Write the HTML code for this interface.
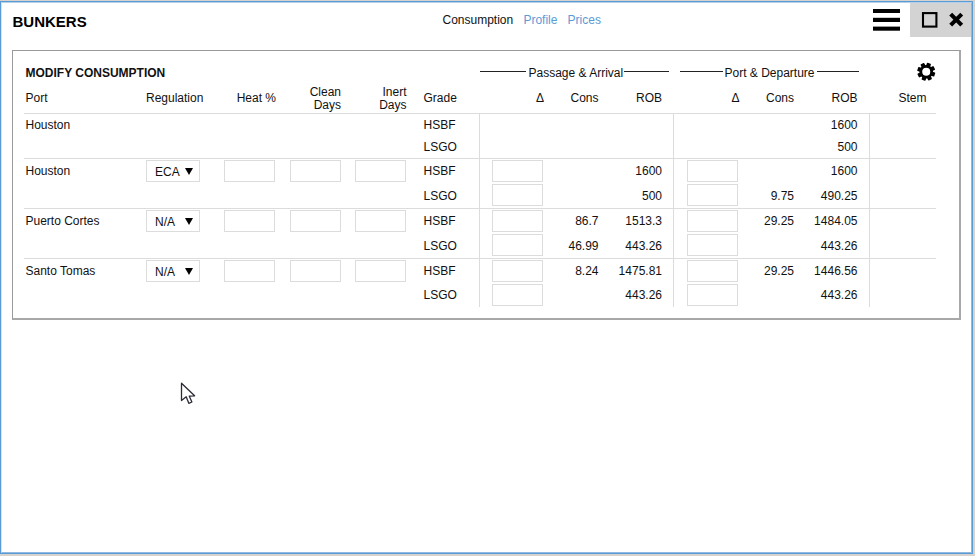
<!DOCTYPE html>
<html>
<head>
<meta charset="utf-8">
<title>Bunkers</title>
<style>
html,body{margin:0;padding:0;}
body{width:975px;height:556px;position:relative;overflow:hidden;background:#d6d3cf;font-family:"Liberation Sans",Arial,sans-serif;font-size:12px;color:#111;}
#win{position:absolute;left:0;top:1px;width:973px;height:553px;box-sizing:border-box;border:1px solid #5b9bd5;background:#fff;}
#win:before{content:'';position:absolute;left:0;top:0;right:0;bottom:0;border:1px solid #8fb9e3;border-left-color:#d3e4f5;border-top-color:#b5d0ec;}
.t{position:absolute;white-space:nowrap;line-height:14px;height:14px;}
.r{text-align:right;width:80px;margin-left:-80px;}
h1{position:absolute;margin:0;left:12.5px;top:13px;font-size:15px;line-height:18px;font-weight:bold;color:#000;}
.nav a{color:#5b9bd5;text-decoration:none;}
#btns{position:absolute;left:910px;top:3px;width:61px;height:34px;background:#d3d3d3;}
#panel{position:absolute;left:12px;top:50px;width:946px;height:267px;border:1px solid #9a9a9a;border-right:2px solid #a8a8a8;border-bottom:2px solid #a8a8a8;box-sizing:content-box;background:#fff;}
.hl{position:absolute;height:1px;background:#dcdcdc;}
.vl{position:absolute;width:1px;background:#dcdcdc;}
.dash{position:absolute;height:1px;background:#222;}
input.i{position:absolute;box-sizing:border-box;width:51px;height:22px;border:1px solid #dcdcdc;background:#fff;padding:0;margin:0;outline:none;border-radius:0;}
.sel{position:absolute;box-sizing:border-box;width:54px;height:22px;border:1px solid #dcdcdc;background:#fff;}
.sel span{position:absolute;left:8px;top:4px;line-height:14px;}
.sel i{position:absolute;left:38px;top:7px;width:0;height:0;border-left:4px solid transparent;border-right:4px solid transparent;border-top:7px solid #000;}
h2{position:absolute;margin:0;font-size:12px;line-height:14px;font-weight:bold;color:#111;}
</style>
</head>
<body>
<div id="win"></div>
<h1>BUNKERS</h1>
<div class="t nav" style="left:442.5px;top:13px;"><span>Consumption</span><a style="margin-left:10.2px">Profile</a><a style="margin-left:10.2px">Prices</a></div>
<svg style="position:absolute;left:872px;top:8px" width="30" height="24" viewBox="0 0 30 24"><rect x="1" y="1" width="27" height="4" fill="#000"/><rect x="1" y="9.8" width="27" height="4.2" fill="#000"/><rect x="1" y="18.6" width="27" height="4.1" fill="#000"/></svg>
<div id="btns"></div>
<svg style="position:absolute;left:915px;top:6px" width="55" height="28" viewBox="0 0 55 28"><rect x="8" y="7.1" width="13.4" height="13.5" fill="none" stroke="#000" stroke-width="2.1"/><path d="M35.7 8.1 L46.7 19.1 M46.7 8.1 L35.7 19.1" stroke="#000" stroke-width="4.1" stroke-linecap="butt"/></svg>
<div id="panel"></div>
<div id="content">
<h2 style="left:25.5px;top:66px;">MODIFY CONSUMPTION</h2>
<div class="t" style="left:25.5px;top:91px;">Port</div>
<div class="t" style="left:146px;top:91px;">Regulation</div>
<div class="t r" style="left:276px;top:91px;">Heat %</div>
<div class="t r" style="left:341px;top:85px;">Clean</div>
<div class="t r" style="left:341px;top:98px;">Days</div>
<div class="t r" style="left:406.5px;top:85px;">Inert</div>
<div class="t r" style="left:406.5px;top:98px;">Days</div>
<div class="t" style="left:423.5px;top:91px;">Grade</div>
<div class="t r" style="left:544px;top:91px;">&Delta;</div>
<div class="t r" style="left:598.5px;top:91px;">Cons</div>
<div class="t r" style="left:662px;top:91px;">ROB</div>
<div class="t r" style="left:739.5px;top:91px;">&Delta;</div>
<div class="t r" style="left:794px;top:91px;">Cons</div>
<div class="t r" style="left:857.5px;top:91px;">ROB</div>
<div class="t r" style="left:926.5px;top:91px;">Stem</div>
<div class="dash" style="left:480px;top:71px;width:46px"></div>
<div class="t" style="left:528.5px;top:66px;">Passage &amp; Arrival</div>
<div class="dash" style="left:624px;top:71px;width:45px"></div>
<div class="dash" style="left:680px;top:71px;width:43px"></div>
<div class="t" style="left:724.5px;top:66px;">Port &amp; Departure</div>
<div class="dash" style="left:817px;top:71px;width:42px"></div>
<div class="hl" style="left:24px;top:113px;width:912px"></div>
<div class="hl" style="left:24px;top:158px;width:912px"></div>
<div class="hl" style="left:24px;top:208px;width:912px"></div>
<div class="hl" style="left:24px;top:258px;width:912px"></div>
<div class="vl" style="left:479px;top:113px;height:194px"></div>
<div class="vl" style="left:673px;top:113px;height:194px"></div>
<div class="vl" style="left:869px;top:113px;height:194px"></div>
<div class="t" style="left:25.5px;top:118px;">Houston</div>
<div class="t" style="left:423.5px;top:118px;">HSBF</div>
<div class="t" style="left:423.5px;top:140px;">LSGO</div>
<div class="t r" style="left:857.5px;top:118px;">1600</div>
<div class="t r" style="left:857.5px;top:140px;">500</div>
<div class="t" style="left:25.5px;top:164px;">Houston</div>
<div class="t" style="left:423.5px;top:164px;">HSBF</div>
<div class="t" style="left:423.5px;top:189px;">LSGO</div>
<div class="t r" style="left:662px;top:164px;">1600</div>
<div class="t r" style="left:857.5px;top:164px;">1600</div>
<div class="t r" style="left:662px;top:189px;">500</div>
<div class="t r" style="left:794px;top:189px;">9.75</div>
<div class="t r" style="left:857.5px;top:189px;">490.25</div>
<div class="sel" style="left:146px;top:160px"><span>ECA</span><i></i></div>
<input class="i" type="text" style="left:224px;top:160px">
<input class="i" type="text" style="left:290px;top:160px">
<input class="i" type="text" style="left:355px;top:160px">
<input class="i" type="text" style="left:492px;top:160px">
<input class="i" type="text" style="left:492px;top:184px">
<input class="i" type="text" style="left:687px;top:160px">
<input class="i" type="text" style="left:687px;top:184px">
<div class="t" style="left:25.5px;top:214px;">Puerto Cortes</div>
<div class="t" style="left:423.5px;top:214px;">HSBF</div>
<div class="t" style="left:423.5px;top:239px;">LSGO</div>
<div class="t r" style="left:598.5px;top:214px;">86.7</div>
<div class="t r" style="left:662px;top:214px;">1513.3</div>
<div class="t r" style="left:794px;top:214px;">29.25</div>
<div class="t r" style="left:857.5px;top:214px;">1484.05</div>
<div class="t r" style="left:598.5px;top:239px;">46.99</div>
<div class="t r" style="left:662px;top:239px;">443.26</div>
<div class="t r" style="left:857.5px;top:239px;">443.26</div>
<div class="sel" style="left:146px;top:210px"><span>N/A</span><i></i></div>
<input class="i" type="text" style="left:224px;top:210px">
<input class="i" type="text" style="left:290px;top:210px">
<input class="i" type="text" style="left:355px;top:210px">
<input class="i" type="text" style="left:492px;top:210px">
<input class="i" type="text" style="left:492px;top:234px">
<input class="i" type="text" style="left:687px;top:210px">
<input class="i" type="text" style="left:687px;top:234px">
<div class="t" style="left:25.5px;top:264px;">Santo Tomas</div>
<div class="t" style="left:423.5px;top:264px;">HSBF</div>
<div class="t" style="left:423.5px;top:288px;">LSGO</div>
<div class="t r" style="left:598.5px;top:264px;">8.24</div>
<div class="t r" style="left:662px;top:264px;">1475.81</div>
<div class="t r" style="left:794px;top:264px;">29.25</div>
<div class="t r" style="left:857.5px;top:264px;">1446.56</div>
<div class="t r" style="left:662px;top:288px;">443.26</div>
<div class="t r" style="left:857.5px;top:288px;">443.26</div>
<div class="sel" style="left:146px;top:260px"><span>N/A</span><i></i></div>
<input class="i" type="text" style="left:224px;top:260px">
<input class="i" type="text" style="left:290px;top:260px">
<input class="i" type="text" style="left:355px;top:260px">
<input class="i" type="text" style="left:492px;top:260px">
<input class="i" type="text" style="left:492px;top:284px">
<input class="i" type="text" style="left:687px;top:260px">
<input class="i" type="text" style="left:687px;top:284px">
<svg style="position:absolute;left:914px;top:60px" width="24" height="24" viewBox="-12 -12 24 24"><g transform="translate(0.25,-0.25)"><circle r="5.45" fill="none" stroke="#000" stroke-width="2.8"/><rect x="-2.1" y="-9" width="4.2" height="4.5" rx="0.7" transform="rotate(18.5)"/><rect x="-2.1" y="-9" width="4.2" height="4.5" rx="0.7" transform="rotate(63.5)"/><rect x="-2.1" y="-9" width="4.2" height="4.5" rx="0.7" transform="rotate(108.5)"/><rect x="-2.1" y="-9" width="4.2" height="4.5" rx="0.7" transform="rotate(153.5)"/><rect x="-2.1" y="-9" width="4.2" height="4.5" rx="0.7" transform="rotate(198.5)"/><rect x="-2.1" y="-9" width="4.2" height="4.5" rx="0.7" transform="rotate(243.5)"/><rect x="-2.1" y="-9" width="4.2" height="4.5" rx="0.7" transform="rotate(288.5)"/><rect x="-2.1" y="-9" width="4.2" height="4.5" rx="0.7" transform="rotate(333.5)"/></g></svg>
<svg style="position:absolute;left:178px;top:380px" width="20" height="26" viewBox="0 0 20 26"><path d="M3.5 3.2 L3.5 20.5 L8.2 16.8 L10.8 23.3 L13.9 22 L11.3 16.2 L16.6 15.8 Z" fill="#fff" stroke="#2b2b36" stroke-width="1.3" stroke-linejoin="round"/></svg>
</div>
</body>
</html>
